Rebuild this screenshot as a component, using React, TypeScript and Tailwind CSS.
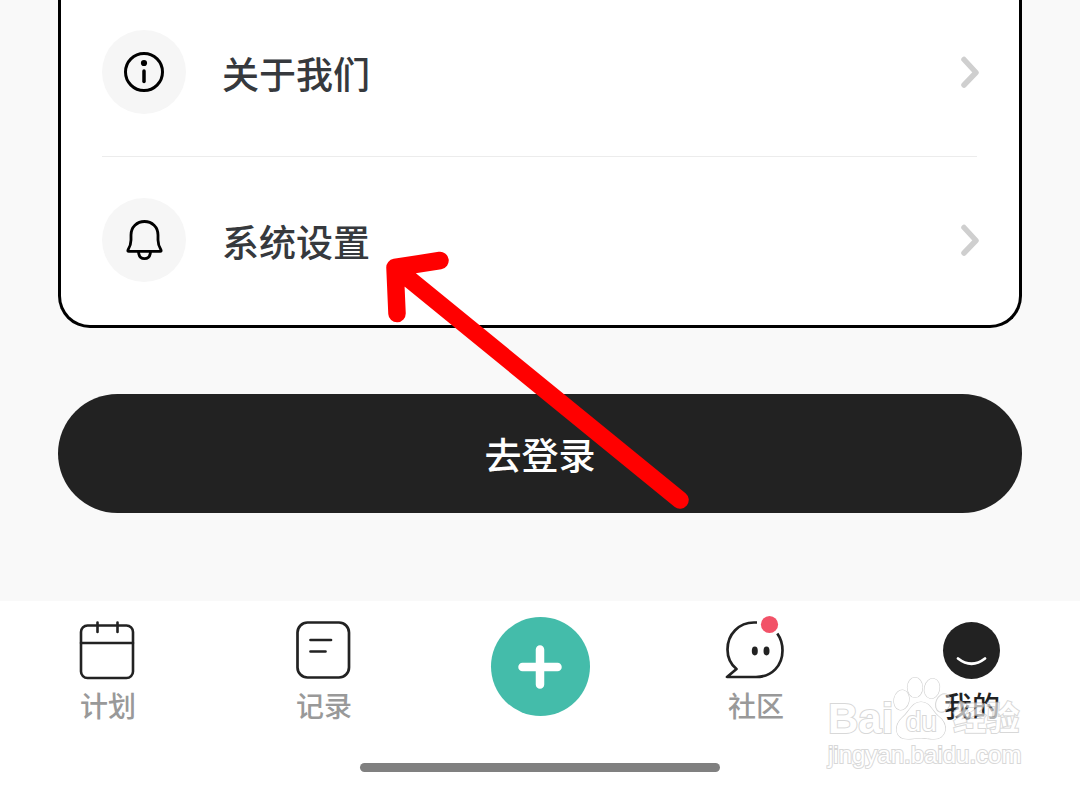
import type { ReactNode } from "react";

const chevron = (
  <svg className="h-8 w-5 shrink-0" viewBox="0 0 20 32" fill="none" stroke="#cfcfcf" strokeWidth="5.500" strokeLinecap="round" strokeLinejoin="round" aria-hidden="true">
    <path d="M4 3.500 L16 16.500 L4 29" />
  </svg>
);

function MenuRow({ label, icon }: { label: string; icon: ReactNode }) {
  return (
    <a href="#" className="flex items-center pt-[41px] pb-[42px]">
      <span className="flex size-[84px] shrink-0 items-center justify-center rounded-full bg-[#f6f6f6]">{icon}</span>
      <span className="ml-9 flex-1 pt-0.5 text-[37px] leading-[56px] font-medium text-[#36393d]">{label}</span>
      {chevron}
    </a>
  );
}

function Tab({ label, icon, active = false }: { label: string; icon: ReactNode; active?: boolean }) {
  return (
    <a href="#" className="flex flex-col items-center">
      {icon}
      <span className={active ? "mt-1 text-[28px] leading-10 font-medium text-[#222222]" : "mt-1 text-[28px] leading-10 font-medium text-[#999999]"}>
        {label}
      </span>
    </a>
  );
}

const infoIcon = (
  <svg className="size-11" viewBox="0 0 44 44" fill="none" stroke="#000" strokeLinecap="round" aria-hidden="true">
    <circle cx="22" cy="22" r="18.500" strokeWidth="3" />
    <circle cx="22" cy="13" r="3.100" fill="#000" stroke="none" />
    <path d="M22 21 V31.500" strokeWidth="3.500" />
  </svg>
);

const bellIcon = (
  <svg className="size-11" viewBox="0 0 44 44" fill="none" stroke="#000" strokeWidth="2.800" strokeLinecap="round" strokeLinejoin="round" aria-hidden="true">
    <path d="M9 17 C9 9 15 3.500 22.500 3.500 C30 3.500 36 9 36 17 V22 C36 26.500 37.500 29.500 39 32 Q39.600 33.400 38.200 33.400 H6.800 Q5.400 33.400 6 32 C7.500 29.500 9 26.500 9 22 Z" />
    <path d="M16.500 34 C16.800 38 19 40.600 22.500 40.600 C26 40.600 28.200 38 28.500 34" />
  </svg>
);

const calendarIcon = (
  <svg className="size-[60px]" viewBox="0 0 60 60" fill="none" stroke="#222" strokeWidth="2.600" strokeLinecap="round" aria-hidden="true">
    <rect x="3" y="4.500" width="52" height="52.500" rx="6.500" />
    <path d="M3 22 H55 M19.500 1.500 V11 M39.500 1.500 V11" />
  </svg>
);

const noteIcon = (
  <svg className="size-[60px]" viewBox="0 0 60 60" fill="none" stroke="#222" strokeWidth="2.700" strokeLinecap="round" aria-hidden="true">
    <rect x="3.500" y="1.500" width="51.500" height="55" rx="10" />
    <path d="M16.500 19 H37 M16.500 30.500 H31.500" />
  </svg>
);

const chatIcon = (
  <svg className="size-[60px] overflow-visible" viewBox="0 0 60 60" fill="none" stroke="#222" strokeWidth="2.700" strokeLinejoin="round" aria-hidden="true">
    <path d="M31 1.500 H28 C13 1.500 1.500 13 1.500 28.500 C1.500 37 5 43.500 10.500 48 L1 56 H30 C46 56 56.500 44.500 56.500 29.500 C56.500 23 54.500 17 51.300 12.500" />
    <ellipse cx="28.800" cy="30" rx="3" ry="4.400" fill="#222" stroke="none" />
    <ellipse cx="40.500" cy="30" rx="3" ry="4.400" fill="#222" stroke="none" />
    <circle cx="43.500" cy="3.500" r="8.600" fill="#f25268" stroke="none" />
  </svg>
);

const faceIcon = (
  <svg className="size-[60px]" viewBox="0 0 60 60" fill="none" aria-hidden="true">
    <circle cx="29.500" cy="29.500" r="28.500" fill="#222" />
    <path d="M16 37.500 Q29.500 48 43 37.500" stroke="#fff" strokeWidth="2.800" strokeLinecap="round" />
  </svg>
);

function Watermark() {
  return (
    <div className="pointer-events-none absolute top-[70px] right-[58px] w-[194px] font-['Liberation_Sans','Noto_Sans_CJK_SC',sans-serif] text-white opacity-65 [-webkit-text-stroke:2px_#c4c4c4] [paint-order:stroke_fill]">
      <div className="flex h-[70px] items-end">
        <span className="text-[42px] leading-[44px] font-bold">Bai</span>
        <span className="relative flex h-[66px] w-[56px] shrink-0 items-end justify-center">
          <svg className="absolute inset-0 size-full overflow-visible" viewBox="0 0 56 66" fill="#fff" stroke="#b8b8b8" strokeWidth="1.200" aria-hidden="true">
            <ellipse cx="8.500" cy="25" rx="7.500" ry="10" transform="rotate(12 8.500 25)" />
            <ellipse cx="22" cy="12.500" rx="7.500" ry="10" />
            <ellipse cx="39" cy="13.500" rx="7.500" ry="10" transform="rotate(12 39 13.500)" />
            <ellipse cx="50" cy="28" rx="7" ry="9.500" transform="rotate(22 50 28)" fillOpacity="0.5" />
            <path d="M28 27 C37 27 39 36 45 41 C57 50 53 64 41 64 C35 64 33 63 28 63 C23 63 20 64 15 64 C2 64 0 51 10 42 C17 36 19 27 28 27 Z" />
          </svg>
          <span className="relative text-[28px] leading-[38px]">du</span>
        </span>
        <span className="ml-1 shrink-0 text-[33px] leading-[44px] font-bold">经验</span>
      </div>
      <div className="text-[24px] leading-7">jingyan.baidu.com</div>
    </div>
  );
}

export default function App() {
  return (
    <div className="relative flex min-h-screen flex-col overflow-hidden bg-[#f9f9f9] font-['Noto_Sans_CJK_SC',sans-serif]">
      <main className="flex-1 px-[58px] pb-[88px]">
        <section className="-mt-[11px] rounded-b-[32px] border-x-[3px] border-b-[3px] border-black bg-white pr-[39px] pb-px pl-[41px]">
          <MenuRow label="关于我们" icon={infoIcon} />
          <hr className="mr-[3px] border-t border-[#ececec]" />
          <MenuRow label="系统设置" icon={bellIcon} />
        </section>
        <button type="button" className="mt-[66px] flex h-[119px] w-full items-center justify-center rounded-full bg-[#222222] pt-0.5 text-[37px] font-medium text-white">
          去登录
        </button>
      </main>

      <nav className="relative bg-white pb-5">
        <div className="grid grid-cols-5 pt-5">
          <Tab label="计划" icon={calendarIcon} />
          <Tab label="记录" icon={noteIcon} />
          <button type="button" aria-label="添加" className="-mt-1 flex size-[99px] items-center justify-center justify-self-center rounded-full bg-[#44bcaa]">
            <svg className="size-11" viewBox="0 0 44 44" stroke="#fff" strokeWidth="8.500" strokeLinecap="round" aria-hidden="true">
              <path d="M22 4.500 V39.500 M4.500 22 H39.500" />
            </svg>
          </button>
          <Tab label="社区" icon={chatIcon} />
          <Tab label="我的" icon={faceIcon} active />
        </div>
        <div className="mx-auto mt-[38px] h-[9px] w-1/3 rounded-full bg-[#808080]" />
        <Watermark />
      </nav>

      <svg className="pointer-events-none absolute top-[250px] left-[384px] h-[262px] w-[308px]" viewBox="384 250 308 262" fill="none" stroke="#ff0000" strokeWidth="17.500" strokeLinecap="round" strokeLinejoin="round" aria-hidden="true">
        <path d="M440 260.500 L395 267.500 L397 313.500 M395 267.500 L680 500" />
      </svg>
    </div>
  );
}
